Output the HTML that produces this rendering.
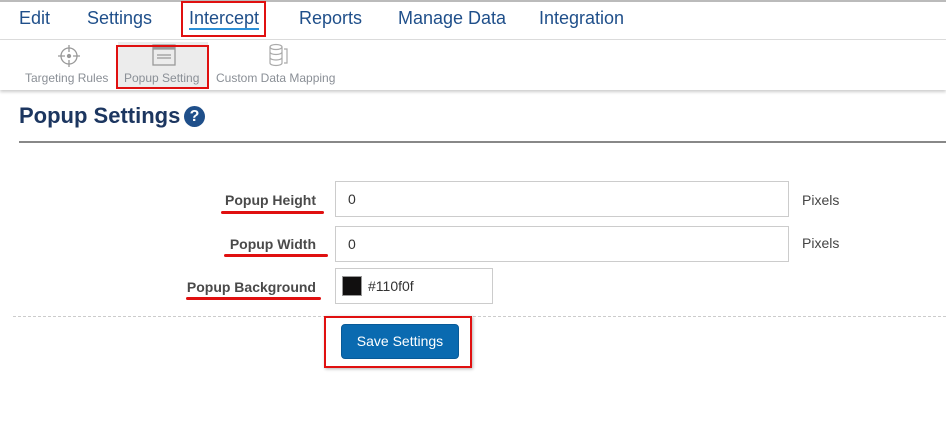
<!DOCTYPE html>
<html><head><style>
*{box-sizing:border-box;margin:0;padding:0}
body{width:946px;height:426px;background:#fff;font-family:"Liberation Sans",sans-serif;position:relative;overflow:hidden}
.a{position:absolute}
.nav{font-size:18px;color:#1f4f8a;top:8px}
.sub{font-size:12px;color:#8a8f96;top:70px}
.lbl{font-size:14px;font-weight:bold;color:#4a4a4a;text-align:right;right:630px}
.inp{border:1px solid #ccc;background:#fff;font-size:14px;color:#333;padding-left:12px;line-height:34px}
.px{font-size:14px;color:#444}
.ul{height:3px;background:#e01010;border-radius:2px}
.rb{border:2px solid #e01010}
</style></head><body>
<div class="a" style="left:0;top:0;width:946px;height:2px;background:#bbb"></div>
<div class="a" style="left:0;top:39px;width:946px;height:1px;background:#ddd"></div>
<div class="a nav" style="left:19px">Edit</div>
<div class="a nav" style="left:87px">Settings</div>
<div class="a nav" style="left:189px;border-bottom:2px solid #2a8fd8;line-height:20px">Intercept</div>
<div class="a rb" style="left:181px;top:1px;width:85px;height:36px"></div>
<div class="a nav" style="left:299px">Reports</div>
<div class="a nav" style="left:398px">Manage Data</div>
<div class="a nav" style="left:539px">Integration</div>
<div class="a" style="left:0;top:40px;width:946px;height:50px;background:#fff;box-shadow:0 2px 3px rgba(0,0,0,.2)"></div>
<div class="a" style="left:118px;top:42px;width:90px;height:47px;background:#ececec"></div>
<svg class="a" style="left:57px;top:44px" width="24" height="24" viewBox="0 0 24 24" fill="none" stroke="#999" stroke-width="1.3"><circle cx="12" cy="12" r="8"/><path d="M12 1v7M12 16v7M1 12h7M16 12h7"/><circle cx="12" cy="12" r="1.5" fill="#999"/></svg>
<svg class="a" style="left:151px;top:43px" width="26" height="24" viewBox="0 0 26 24" fill="none" stroke="#999" stroke-width="1.3"><rect x="2" y="2" width="22" height="20"/><rect x="3" y="3" width="20" height="3" fill="#999"/><path d="M6 12h14M6 15h14"/></svg>
<svg class="a" style="left:266px;top:43px" width="24" height="24" viewBox="0 0 24 24" fill="none" stroke="#aaa" stroke-width="1.2"><ellipse cx="10" cy="4" rx="6" ry="2.5"/><path d="M4 4v16c0 1.5 2.7 2.5 6 2.5s6-1 6-2.5V4M4 9c0 1.5 2.7 2.5 6 2.5s6-1 6-2.5M4 14.5c0 1.5 2.7 2.5 6 2.5s6-1 6-2.5M18 6h3v14h-3"/></svg>
<div class="a sub" style="left:25px;top:71px">Targeting Rules</div>
<div class="a sub" style="left:124px;top:71px">Popup Setting</div>
<div class="a sub" style="left:216px;top:71px">Custom Data Mapping</div>
<div class="a rb" style="left:116px;top:45px;width:93px;height:44px"></div>
<div class="a" style="left:19px;top:103px;font-size:22px;font-weight:bold;color:#1c3660">Popup Settings</div>
<div class="a" style="left:184px;top:106px;width:21px;height:21px;border-radius:50%;background:#1f4f8a;color:#fff;font-weight:bold;font-size:16px;text-align:center;line-height:21px">?</div>
<div class="a" style="left:19px;top:141px;width:927px;height:2px;background:#888"></div>
<div class="a lbl" style="top:192px">Popup Height</div>
<div class="a ul" style="left:221px;top:211px;width:103px"></div>
<div class="a inp" style="left:335px;top:181px;width:454px;height:36px">0</div>
<div class="a px" style="left:802px;top:192px">Pixels</div>
<div class="a lbl" style="top:236px">Popup Width</div>
<div class="a ul" style="left:224px;top:254px;width:104px"></div>
<div class="a inp" style="left:335px;top:226px;width:454px;height:36px">0</div>
<div class="a px" style="left:802px;top:235px">Pixels</div>
<div class="a lbl" style="top:279px">Popup Background</div>
<div class="a ul" style="left:186px;top:297px;width:135px"></div>
<div class="a inp" style="left:335px;top:268px;width:158px;height:36px;padding-left:32px">#110f0f</div>
<div class="a" style="left:342px;top:276px;width:20px;height:20px;background:#110f0f;border:1px solid #999"></div>
<div class="a" style="left:13px;top:316px;width:933px;border-top:1px dashed #ccc"></div>
<div class="a" style="left:341px;top:324px;width:118px;height:35px;background:#0a6ab0;border:1px solid #085a98;border-radius:4px;color:#fff;font-size:14px;text-align:center;line-height:33px">Save Settings</div>
<div class="a rb" style="left:324px;top:316px;width:148px;height:52px;box-shadow:1px 1px 3px rgba(0,0,0,.3)"></div>
</body></html>
